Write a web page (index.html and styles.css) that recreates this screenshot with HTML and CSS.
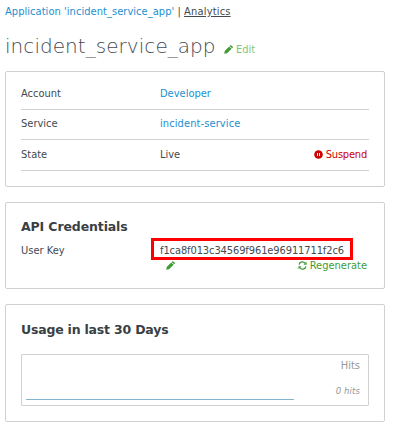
FILE: index.html
```html
<!DOCTYPE html>
<html lang="en">
<head>
<meta charset="utf-8">
<title>incident_service_app</title>
<link rel="stylesheet" href="styles.css">
</head>
<body>
<svg class="defs" aria-hidden="true">
  <symbol id="pencil" viewBox="0 0 10 10"><path d="M.3 9.7 .8 6.6 5.8 1.6 8.4 4.2 3.4 9.2ZM6.3 1.1 7 .4Q7.6-.1 8.2.5L9.5 1.8Q10.1 2.4 9.6 3L8.9 3.7Z"/></symbol>
</svg>
<nav class="crumbs"><a href="#">Application 'incident_service_app'</a> | <a class="current" href="#">Analytics</a></nav>
<header class="title"><h1>incident_service_app</h1><a class="edit" href="#"><svg class="icon"><use href="#pencil"/></svg><span>Edit</span></a></header>
<section class="card details">
  <div class="row"><span class="label">Account</span><a href="#">Developer</a></div>
  <div class="row"><span class="label">Service</span><a class="service" href="#">incident-service</a></div>
  <div class="row state"><span class="label">State</span><span>Live</span><a class="suspend" href="#"><svg class="icon" viewBox="0 0 9 9"><circle cx="4.5" cy="4.5" r="4.3"/><path d="M3 3h1v3H3zM5 3h1v3H5z" fill="#fff"/></svg><span>Suspend</span></a></div>
</section>
<section class="card credentials">
  <h2>API Credentials</h2>
  <div class="keyrow"><span class="label">User Key</span><span class="key">f1ca8f013c34569f961e96911711f2c6</span></div>
  <div class="actions"><a class="green" href="#"><svg class="icon"><use href="#pencil"/></svg></a><a class="green regenerate" href="#"><svg class="icon" viewBox="0 0 10 10"><path d="M1.2 4A3.7 3.7 0 0 1 7.9 2.6M8.8 6A3.7 3.7 0 0 1 2.1 7.4" fill="none" stroke="currentColor" stroke-width="1.5"/><path d="M9.5.8V4.2H6.1ZM.5 9.2V5.8H3.9Z"/></svg><span>Regenerate</span></a></div>
</section>
<section class="card usage">
  <h2>Usage in last 30 Days</h2>
  <div class="chart"><div class="line"></div><div class="legend"><span>Hits</span><em>0 hits</em></div></div>
</section>
</body>
</html>
```
FILE: styles.css
```css
* { box-sizing: border-box; }
body { margin: 0; padding: 4px 21px 0 5px; background: #fff; color: #434a50; font: 11px/15px "DejaVu Sans Condensed", "DejaVu Sans", sans-serif; white-space: nowrap; }
a { color: #1b8fd0; text-decoration: none; }
h1, h2 { margin: 0; }
.defs { position: absolute; width: 0; height: 0; }
.icon { display: block; width: 9px; height: 9px; fill: currentColor; flex: none; }
.crumbs { height: 15px; letter-spacing: .05px; }
.crumbs .current { color: #434a50; text-decoration: underline; letter-spacing: .18px; }
.title { display: flex; height: 52px; padding-top: 13px; }
h1 { width: 219px; font: 200 20px/28px "DejaVu Sans", sans-serif; letter-spacing: .05px; color: #434a50; }
.edit { display: flex; align-items: center; height: 15px; margin-top: 10px; gap: 3px; color: #3f9c35; }
.edit span { color: #7fc67a; }
.card { width: 380px; border: 1px solid #d1d1d1; border-radius: 2px; padding: 0 15px; }
.details { height: 116px; padding-top: 8px; }
.row { display: flex; align-items: center; height: 30px; padding-bottom: 2px; border-bottom: 1px solid #d1d1d1; }
.row.state { height: 31px; }
.service { letter-spacing: .1px; }
.label { width: 139px; flex: none; }
.suspend { display: flex; align-items: center; gap: 3px; margin-left: auto; padding-right: 2px; color: #c00; letter-spacing: -.2px; }
.credentials { height: 87px; margin-top: 15px; padding-top: 14px; }
h2 { font: bold 12.5px/20px "DejaVu Sans", sans-serif; letter-spacing: -.12px; color: #393f44; }
.usage h2 { letter-spacing: -.2px; }
.keyrow { display: flex; height: 22px; margin-top: 1px; align-items: center; }
.keyrow .label { padding-top: 2px; }
.key { height: 22px; width: 202px; margin-left: -9px; border: 3px solid red; padding-left: 6px; line-height: 19px; letter-spacing: -.1px; }
.actions { display: flex; justify-content: space-between; align-items: center; height: 11px; padding: 0 2px 0 145px; }
.green { display: flex; align-items: center; gap: 3px; color: #3f9c35; }
.usage { height: 118px; margin-top: 15px; padding-top: 15px; }
.chart { display: flex; justify-content: space-between; height: 52px; margin-top: 14px; padding: 3px 8px 0 4px; border: 1px solid #d1d1d1; border-radius: 1px; }
.line { width: 268px; height: 42px; border-bottom: 1px solid #85b4d0; }
.legend { display: flex; flex-direction: column; align-items: flex-end; gap: 10px; color: #999; }
.legend em { font-size: 9.5px; letter-spacing: .1px; }
```
